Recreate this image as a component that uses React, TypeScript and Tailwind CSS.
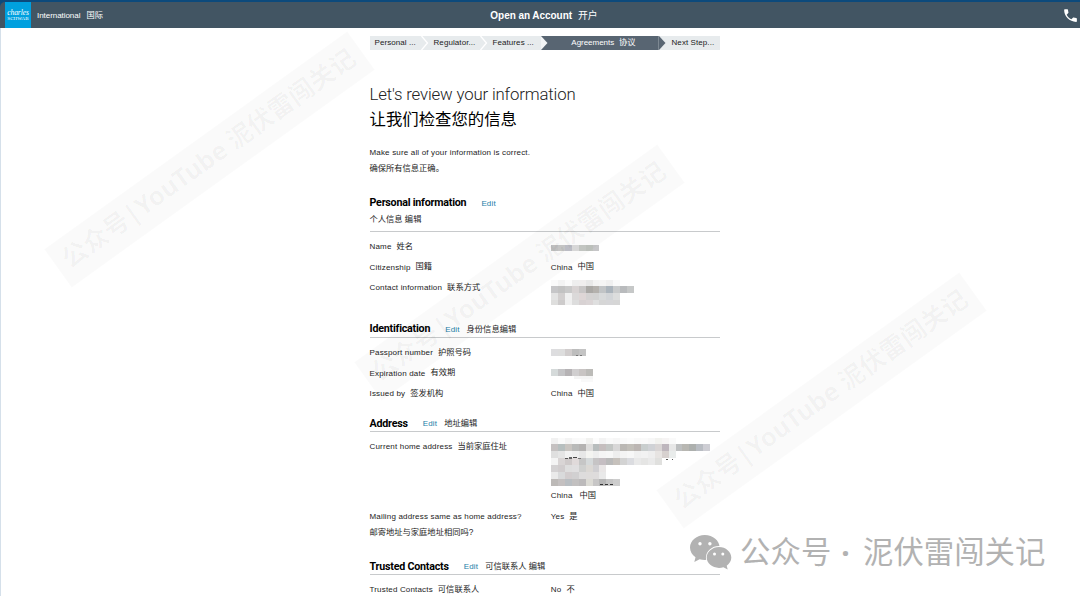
import React from "react";
import { MdPhone } from "react-icons/md";

type Cell = [number, number, number, number, string];

function Mosaic({ cells, className }: { cells: Cell[]; className: string }) {
  return (
    <svg className={className} shapeRendering="crispEdges" aria-hidden="true">
      {cells.map(([x, y, w, h, fill], i) => (
        <rect key={i} x={x} y={y} width={w} height={h} fill={fill} />
      ))}
    </svg>
  );
}

function strip(y: number, h: number, colors: string, x0 = 0): Cell[] {
  return colors
    .split(" ")
    .map((c, i): Cell => {
      const x = Math.round(x0 + i * 6.92);
      return [x, y, Math.round(x0 + (i + 1) * 6.92) - x, h, c === "-" ? "none" : "#" + c];
    });
}

const nameCells = strip(0, 6, "c3c3c3 c8c8c8 bfc0c8 dcdcdc c6c9c5 bfc3be c6c6c8");
const contactCells: Cell[] = [
  ...strip(0, 6, "fafafa f3f3f3 fafafa eeeeee f0eeee e8e8e8 f3f3f3 f5f5f5 f0f0f0 fafafa"),
  ...strip(6, 7, "c6c6c8 c2c2c2 c9c9c9 d8d3d3 c8c6c6 aaa8a5 b4b1ad c1c4c6 abb4bc c9cbcc b9bbbd c6c8c8"),
  ...strip(13, 7, "e3e3e3 d2cfcf f0f0f0 dbd9d9 ded6d6 d4d2d2 d2d2d2 d8dadb d2d5d8 dcdddd"),
  ...strip(20, 5, "dededd cdcbcb efefef dddddd d8d2d3 dbd5d6 dfdfdf d6d6d6 d6d6d8 d6d6d6"),
];
const passportCells: Cell[] = [
  ...strip(0, 7, "dddddf dddddd d1cdcd bdbdbd c4c4c4"),
  [25, 6, 2, 1, "#777777"],
  [29, 6, 2, 1, "#777777"],
];
const expiryCells: Cell[] = [
  ...strip(0, 7, "d5dada c4c4c6 b6b3b5 d0cecf c8c4c3 bcbbb8"),
  [23, 7, 19, 3, "#f4f4f4"],
  [30, 10, 12, 3, "#f9f9f9"],
];
const addressCells: Cell[] = [
  ...strip(0, 6, "f1f1f1 fafafa f3f3f3 f9f9f9 fafafa f1f1ef fcfcfc f3f3f3 f9f9f9 f6f6f6 fafafa fcfcfc f9f9f9 fafafa f7f7f7 f2f2ef f6f4f4 fafafa"),
  ...strip(6, 7, "c5c1c1 b7bfbf c9c5c1 b9bab9 b5b3b2 dedddc b8bdbd c5bebe c3c6c4 d8d7d7 bbb8b4 c2bfb9 bcb6b3 c9cece d0d2d6 d9d5d5 beb6bd e7e7e7 bdbfc0 b8b7b2 adb0ae b9bdc3 ceced4"),
  ...strip(13, 7, "dfdfdf e5e5e5 f2f2f2 eeeeee e7e7e7 f4f4f1 eeeeee f5f5f5 f7f7f7 eeeeee f4f4f4 f7f7f7 f0f0f0 f2f2f2 eeeeee e7e4e2 d7d1cf e9eceb"),
  ...strip(20, 7, "f4f4f4 d9d5d5 cfcaca e0dada c6c6c6 d5d9da c6c4c5 c5bec2 bababa c6c1bc d3d3d3 dbdce0 e9e9e9 e5e5e4 eaeaea e0e0de"),
  ...strip(27, 7, "d4d2d3 d1cdce dedede e0dfe0 cfd0cf dbd8d4 d0cfd2 e9e6e6"),
  ...strip(34, 7, "eaeaea d9dadb d2cdce d1d0d1 dddcdc dedcdb dedcdc e9e9e9"),
  ...strip(41, 7, "bcb9b7 c4c0c0 b9bec2 c2c0c0 bcbabb dcdbd5 c7c6c6 b5b5b5 c5c5c5 cdcdcd"),
  [14, 20, 3, 1, "#555555"],
  [18, 19, 3, 2, "#666666"],
  [22, 19, 4, 1, "#444444"],
  [27, 20, 3, 1, "#777777"],
  [115, 21, 2, 1, "#555555"],
  [121, 21, 1, 1, "#555555"],
  [49, 46, 3, 1, "#333333"],
  [54, 46, 3, 1, "#333333"],
  [59, 46, 3, 1, "#333333"],
];

function Bi({ en, zh, gap = "gap-[5px]" }: { en: string; zh?: string; gap?: string }) {
  return (
    <span className={`flex items-center whitespace-nowrap ${gap}`}>
      <span>{en}</span>
      {zh && <span className="text-[8.27px] tracking-normal">{zh}</span>}
    </span>
  );
}

function Row({ en, zh, children }: { en: string; zh?: string; children: React.ReactNode }) {
  return (
    <div className="flex h-[20.6px] items-center">
      <div className="w-[181.3px] shrink-0">
        <Bi en={en} zh={zh} />
      </div>
      <div>{children}</div>
    </div>
  );
}

function SectionTitle({ title, zh }: { title: string; zh?: string }) {
  return (
    <div className="flex h-[17px] items-center whitespace-nowrap pt-[2px]">
      <h2 className="font-['Roboto'] text-[10.7px] font-bold tracking-[-0.22px] text-black">{title}</h2>
      <a className="ml-[15px] pt-px text-[8px] tracking-[0.15px] text-[#1b80a8]">Edit</a>
      {zh && <span className="ml-[7px] pt-px text-[8.27px] tracking-normal">{zh}</span>}
    </div>
  );
}

function Chevron() {
  return (
    <svg className="h-[14px] w-[8px] shrink-0 bg-[#e7ebed]" viewBox="0 0 8 14">
      <path d="M0.5 0 L6.5 7 L0.5 14" fill="none" stroke="#fff" strokeWidth="1.3" />
    </svg>
  );
}

function Stepper() {
  return (
    <nav className="flex h-[14px] items-center whitespace-nowrap text-[8px] tracking-[0.08px] text-[#222]">
      <div className="h-[14px] w-[51px] bg-[#e7ebed] pl-[5px] leading-[14px]">Personal ...</div>
      <Chevron />
      <div className="h-[14px] w-[51px] bg-[#e7ebed] pl-[5px] leading-[14px]">Regulator...</div>
      <Chevron />
      <div className="h-[14px] w-[53px] bg-[#e7ebed] pl-[5px] leading-[14px]">Features ...</div>
      <svg className="h-[14px] w-[7px] shrink-0 bg-[#586572]" viewBox="0 0 7 14">
        <path d="M0 0 L6.5 7 L0 14Z" fill="#f3f5f6" />
      </svg>
      <div className="flex h-[14px] w-[111px] items-center justify-center border-r border-[#7d8892] bg-[#586572] pl-[2px] tracking-[-0.04px] text-white">
        <Bi en="Agreements" zh="协议" />
      </div>
      <svg className="h-[14px] w-[7px] shrink-0 bg-[#e7ebed]" viewBox="0 0 7 14">
        <path d="M0 0 L6.5 7 L0 14Z" fill="#586572" />
      </svg>
      <div className="h-[14px] flex-1 bg-[#e7ebed] pl-[6px] leading-[14px]">Next Step...</div>
    </nav>
  );
}

function Band({ place }: { place: string }) {
  return (
    <div
      className={`pointer-events-none absolute flex h-[47px] w-[373px] -rotate-[35.7deg] items-center justify-center whitespace-nowrap bg-[#00000005] pb-[3px] font-['Noto_Sans','Noto_Sans_CJK_SC',sans-serif] text-[25.3px] font-bold tracking-[-0.1px] text-[#00000009] ${place}`}
    >
      公众号|YouTube 泥伏雷闯关记
    </div>
  );
}

function ChatBubbles() {
  return (
    <svg className="h-[37px] w-[42px] shrink-0" viewBox="0 0 42 37">
      <path
        d="M14.8 1C6.7 1 0 6.700 0 13.600c0 3.900 2.100 7.300 5.500 9.600L4.300 28l5.300-2.700c1.700.5 3.400.8 5.200.8 8.200 0 14.800-5.500 14.800-12.500S23 1 14.800 1Z"
        fill="#b2b2b2"
      />
      <path
        d="M29 12.900c6.800 0 12.300 4.800 12.300 10.700 0 3.300-1.800 6.100-4.600 8.100l1 3.800-4.300-2.300c-1.400.4-2.900.7-4.400.7-6.800 0-12.300-4.600-12.300-10.300S22.200 12.900 29 12.900Z"
        fill="#b2b2b2"
        stroke="#fff"
        strokeWidth="1.6"
        paintOrder="stroke"
      />
      <circle cx="10" cy="9.800" r="1.7" fill="#fff" />
      <circle cx="19.900" cy="9.800" r="1.7" fill="#fff" />
      <circle cx="24.500" cy="19.900" r="1.5" fill="#fff" />
      <circle cx="32.800" cy="19.900" r="1.5" fill="#fff" />
    </svg>
  );
}

export default function App() {
  return (
    <div className="relative h-[596px] w-[1080px] overflow-hidden bg-white font-['Liberation_Sans','Noto_Sans_CJK_SC',sans-serif] text-[8px] tracking-[0.17px] text-[#1c1c1c]">
      <div className="bg-[#0c4a7c] pt-[2px]">
        <header className="grid h-[26px] grid-cols-3 items-center rounded-tl-[5px] bg-[#425563] text-white">
          <div className="flex items-center pl-[5px]">
            <div className="flex h-[26px] w-[26px] flex-col items-center justify-center bg-[#00a0df] font-['Liberation_Serif',serif] leading-none">
              <span className="text-[7.6px] italic leading-[6px] tracking-[-0.1px]">charles</span>
              <span className="text-[5px] leading-[5px] tracking-[0.1px]">SCHWAB</span>
            </div>
            <div className="ml-[6px] pt-[2px] text-[8px] tracking-[-0.05px]">
              <Bi en="International" zh="国际" gap="gap-[6px]" />
            </div>
          </div>
          <div className="flex items-center justify-center gap-[6px] whitespace-nowrap pl-[8px] pt-px">
            <span className="text-[10px] font-bold tracking-[-0.05px]">Open an Account</span>
            <span className="pt-px text-[9.8px] tracking-normal">开户</span>
          </div>
          <div className="flex justify-end pr-px">
            <MdPhone className="h-[17px] w-[17px]" />
          </div>
        </header>
      </div>

      <main className="h-[568px] border-l border-[#d5e0ea] pl-[368.5px] pt-2">
        <div className="w-[350.5px]">
          <Stepper />
          <h1 className="mt-[32px] h-[25px] whitespace-nowrap font-['Roboto'] text-[16.8px] font-light leading-6 tracking-[-0.16px] text-[#222]">
            Let's review your information
          </h1>
          <p className="h-6 text-[16.4px] leading-6 tracking-normal text-black">让我们检查您的信息</p>
          <p className="mt-[13.7px] h-4 whitespace-nowrap leading-4">Make sure all of your information is correct.</p>
          <p className="h-4 text-[8.27px] leading-4 tracking-normal">确保所有信息正确。</p>

          <section className="pt-[17.3px]">
            <SectionTitle title="Personal information" />
            <p className="box-content h-[19px] border-b border-[#c8cacc] pt-px text-[8.27px] leading-4 tracking-normal">个人信息 编辑</p>
            <div className="pt-[4.7px]">
              <Row en="Name" zh="姓名">
                <Mosaic cells={nameCells} className="mt-[2px] block h-[6px] w-[49px]" />
              </Row>
              <Row en="Citizenship" zh="国籍">
                <Bi en="China" zh="中国" />
              </Row>
              <Row en="Contact information" zh="联系方式">
                <Mosaic cells={contactCells} className="mt-[9px] block h-[25px] w-[84px]" />
              </Row>
            </div>
          </section>

          <section className="pt-[21.5px]">
            <SectionTitle title="Identification" zh="身份信息编辑" />
            <div className="border-t border-[#c8cacc] pt-[4.7px]">
              <Row en="Passport number" zh="护照号码">
                <Mosaic cells={passportCells} className="-mt-px block h-[7px] w-[35px]" />
              </Row>
              <Row en="Expiration date" zh="有效期">
                <Mosaic cells={expiryCells} className="mt-[4px] block h-[13px] w-[42px]" />
              </Row>
              <Row en="Issued by" zh="签发机构">
                <Bi en="China" zh="中国" />
              </Row>
            </div>
          </section>

          <section className="pt-[9.8px]">
            <SectionTitle title="Address" zh="地址编辑" />
            <div className="border-t border-[#c8cacc] pt-[4.5px]">
              <div className="flex h-[70px]">
                <div className="flex h-[20.6px] w-[181.3px] shrink-0 items-center">
                  <Bi en="Current home address" zh="当前家庭住址" />
                </div>
                <div className="pt-[1.5px]">
                  <Mosaic cells={addressCells} className="block h-[48px] w-[160px]" />
                  <div className="flex h-[19px] items-center">
                    <Bi en="China" zh="中国" gap="gap-[7px]" />
                  </div>
                </div>
              </div>
              <Row en="Mailing address same as home address?">
                <Bi en="Yes" zh="是" />
              </Row>
              <p className="-mt-[2px] h-4 text-[8.27px] leading-4 tracking-normal">邮寄地址与家庭地址相同吗?</p>
            </div>
          </section>

          <section className="pt-[16px]">
            <SectionTitle title="Trusted Contacts" zh="可信联系人 编辑" />
            <div className="border-t border-[#c8cacc] pt-[4.7px]">
              <Row en="Trusted Contacts" zh="可信联系人">
                <Bi en="No" zh="不" />
              </Row>
            </div>
          </section>
        </div>
      </main>

      <Band place="left-[23px] top-[136px]" />
      <Band place="left-[333px] top-[249px]" />
      <Band place="left-[635px] top-[377px]" />

      <div className="absolute left-[690px] top-[534px] flex h-[37px] items-center whitespace-nowrap text-[#b2b2b2]">
        <ChatBubbles />
        <span className="ml-[8px] text-[30.4px] leading-[37px] tracking-[0.1px]">公众号</span>
        <span className="ml-[9px] w-[10px] text-center font-['Noto_Sans'] text-[30px] font-bold leading-[37px]">·</span>
        <span className="ml-[12.5px] text-[30.4px] leading-[37px] tracking-normal">泥伏雷闯关记</span>
      </div>
    </div>
  );
}
